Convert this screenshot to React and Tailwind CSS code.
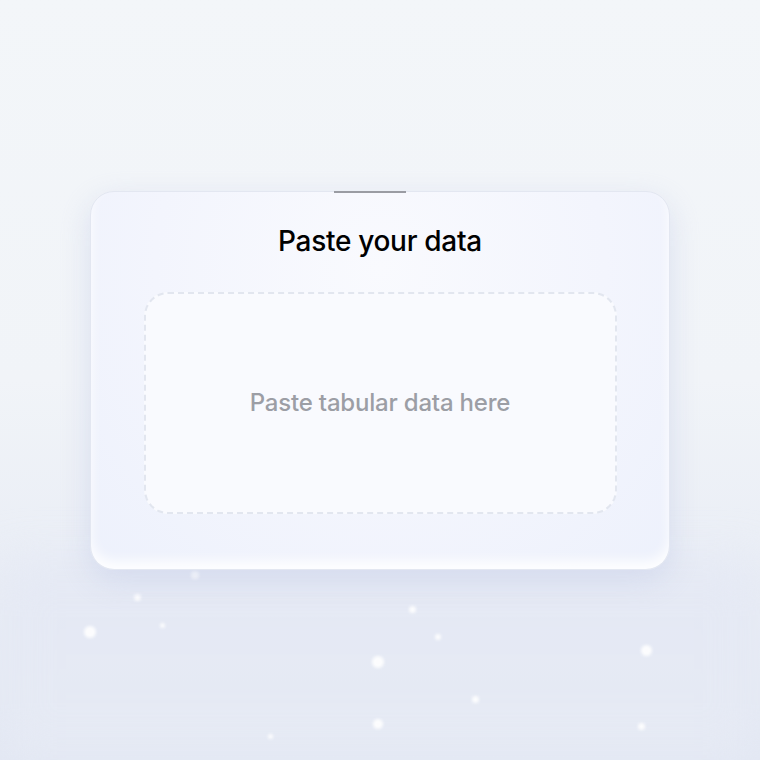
import React from "react";

const sparkles = [
  { x: 90, y: 632, s: 12 },
  { x: 137, y: 597, s: 7 },
  { x: 162, y: 625, s: 5 },
  { x: 195, y: 575, s: 8 },
  { x: 378, y: 662, s: 12 },
  { x: 412, y: 609, s: 7 },
  { x: 438, y: 637, s: 6 },
  { x: 475, y: 699, s: 7 },
  { x: 378, y: 724, s: 10 },
  { x: 270, y: 736, s: 5 },
  { x: 646, y: 650, s: 11 },
  { x: 641, y: 726, s: 7 },
];

const App = () => {
  return (
    <div
      className="relative w-[760px] h-[760px] overflow-hidden bg-gradient-to-b from-[#f3f6f9] via-[#f1f4f8] to-[#e2e7f3] flex flex-col items-center pt-[191px]"
      style={{ fontFamily: "Inter, 'Liberation Sans', sans-serif" }}
    >
      <div className="absolute left-0 right-0 top-[560px] h-[200px] bg-gradient-to-b from-[#e3e7f4] to-[#e8ecf5] opacity-70 blur-xl" />
      {sparkles.map((p, i) => (
        <div
          key={i}
          className="absolute rounded-full bg-white blur-[1.5px] opacity-90"
          style={{ left: p.x - p.s / 2, top: p.y - p.s / 2, width: p.s, height: p.s }}
        />
      ))}
      <div className="relative w-[580px] h-[379px] rounded-[24px] border border-[#e3e7f1] bg-[radial-gradient(ellipse_at_50%_20%,#f9fafe_0%,#f3f5fd_55%,#edf1fc_100%)] shadow-[0_10px_30px_rgba(190,200,230,0.45),inset_0_-8px_12px_rgba(255,255,255,0.9)] flex flex-col items-center">
        <div className="absolute -top-px left-[243px] w-[72px] h-[2px] bg-[#9a9ca3]" />
        <h1 className="mt-[32px] text-[28px] leading-[34px] font-medium text-black tracking-[-0.3px]">
          Paste your data
        </h1>
        <div className="mt-[34px] w-[473px] h-[222px] rounded-[24px] border-2 border-dashed border-[#e2e6ef] bg-[#f9fafe] flex items-center justify-center">
          <span className="text-[24px] font-medium text-[#9c9ea5] tracking-[-0.2px]">
            Paste tabular data here
          </span>
        </div>
      </div>
    </div>
  );
};

export default App;
